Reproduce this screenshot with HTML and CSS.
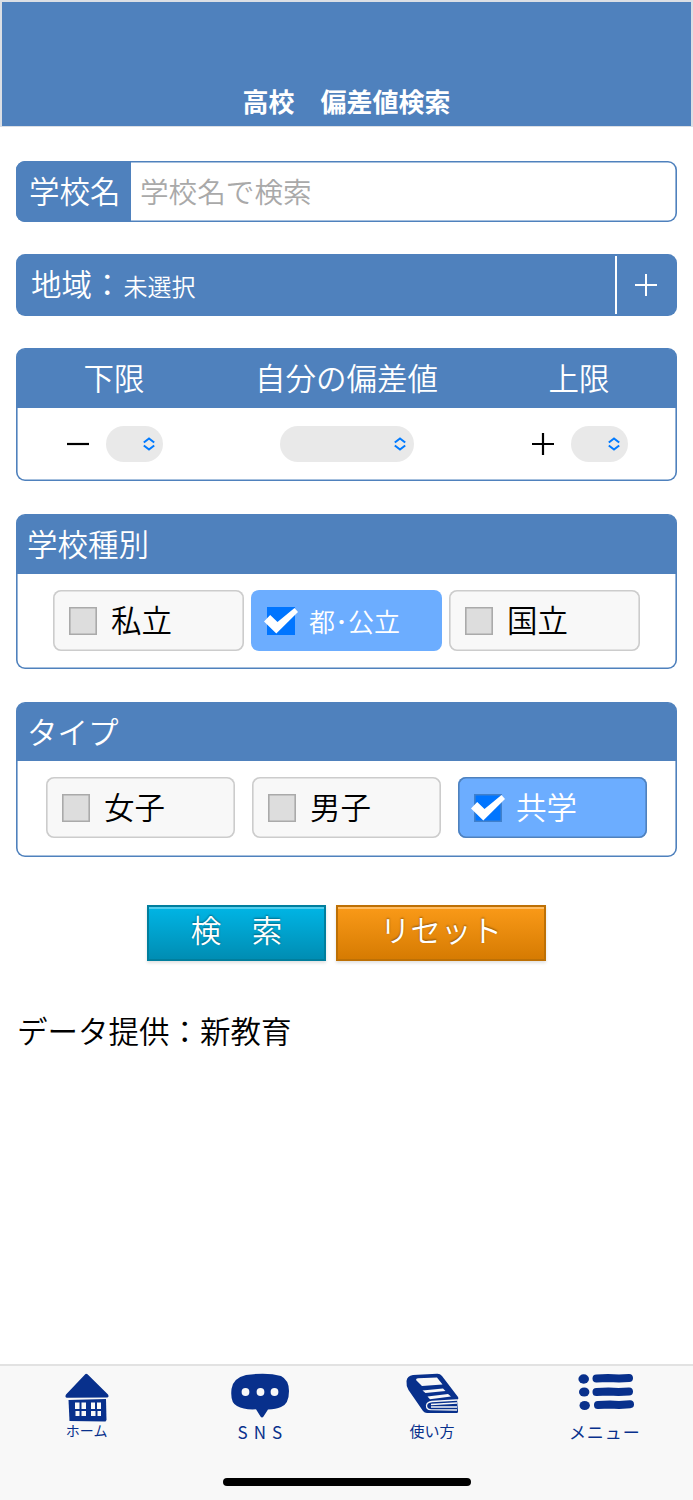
FILE: index.html
```html
<!DOCTYPE html>
<html lang="ja">
<head>
  <meta charset="UTF-8">
  <meta name="viewport" content="width=device-width, initial-scale=1.0">
  <title>高校　偏差値検索</title>
  <link rel="stylesheet" href="styles.css">
</head>
<body>

  <header class="header">
    <h1>高校　偏差値検索</h1>
  </header>

  <main class="main">
    <div class="search">
      <label class="search-label" for="schoolName">学校名</label>
      <input type="text" id="schoolName" placeholder="学校名で検索">
    </div>

    <div class="area">
      <div class="area-name">地域：<small>未選択</small></div>
      <div class="area-open">
        <svg width="24" height="24" viewBox="0 0 24 24"><path d="M1 12h22M12 1v22" stroke="#fff" stroke-width="2"/></svg>
      </div>
    </div>

    <!-- 偏差値 -->
    <section class="card score">
      <div class="card-head score-row">
        <span>下限</span><span>自分の偏差値</span><span>上限</span>
      </div>
      <div class="score-row score-body">
        <div class="cell">
          <svg width="24" height="24" viewBox="0 0 24 24"><path d="M1 12h22" stroke="#000" stroke-width="2.2"/></svg>
          <span class="select">
            <select aria-label="下限"><option></option></select>
            <svg width="12" height="14" viewBox="0 0 12 14"><path d="M.8 5.5 6 1.4l5.2 4.1M.8 8.5 6 12.6l5.2-4.1"/></svg>
          </span>
        </div>
        <div class="cell">
          <span class="select wide">
            <select aria-label="自分の偏差値"><option></option></select>
            <svg width="12" height="14" viewBox="0 0 12 14"><path d="M.8 5.5 6 1.4l5.2 4.1M.8 8.5 6 12.6l5.2-4.1"/></svg>
          </span>
        </div>
        <div class="cell">
          <svg width="24" height="24" viewBox="0 0 24 24"><path d="M1 12h22M12 1v22" stroke="#000" stroke-width="2.2"/></svg>
          <span class="select">
            <select aria-label="上限"><option></option></select>
            <svg width="12" height="14" viewBox="0 0 12 14"><path d="M.8 5.5 6 1.4l5.2 4.1M.8 8.5 6 12.6l5.2-4.1"/></svg>
          </span>
        </div>
      </div>
    </section>

    <!-- 学校種別 -->
    <section class="card kind">
      <div class="card-head">学校種別</div>
      <div class="choices">
        <div class="choice"><span class="box"></span>私立</div>
        <div class="choice on flat">
          <span class="box"><svg width="34" height="26" viewBox="0 0 34 26"><path d="M0 13.500 6.200 7 13.500 14 30.500 0 34 4 12.300 25.500z" fill="#fff"/></svg></span>
          <span class="small">都･公立</span>
        </div>
        <div class="choice"><span class="box"></span>国立</div>
      </div>
    </section>

    <!-- タイプ -->
    <section class="card type">
      <div class="card-head">タイプ</div>
      <div class="choices">
        <div class="choice"><span class="box"></span>女子</div>
        <div class="choice"><span class="box"></span>男子</div>
        <div class="choice on">
          <span class="box"><svg width="34" height="26" viewBox="0 0 34 26"><path d="M0 13.500 6.200 7 13.500 14 30.500 0 34 4 12.300 25.500z" fill="#fff"/></svg></span>共学
        </div>
      </div>
    </section>

    <div class="buttons">
      <button class="btn blue">検　索</button>
      <button class="btn orange">リセット</button>
    </div>

    <p class="credit">データ提供：新教育</p>
  </main>

  <footer class="footer">
    <nav class="tabs">
      <a class="tab">
        <svg width="46" height="50" viewBox="0 0 46 50">
          <path d="M21 1.500q1-1.500 2.500-.2L44 21.500q1.500 2.500-1 3L3 24.800Q.5 24.500 2 21.500z"/>
          <path d="M4.500 27 42 26l.5 21-1 1.500L5.500 48z"/>
          <path class="cut" d="M11 29.500h4.500v6.500H11zM17.500 29.500H22v6.500h-4.500zM11.500 38h4v5h-4zM17.500 38H22v5h-4.500zM27 29.500h4v6.500h-4zM33 29.500h4v6.500h-4zM27 38h4.500v5H27zM33.500 38H37v5h-3.500z"/>
        </svg>
        <span>ホーム</span>
      </a>
      <a class="tab">
        <svg width="60" height="50" viewBox="0 0 60 50">
          <path d="M1.500 16Q3 5 16 2q21-3 35 1 8 4 8 15 0 13-8 16-5 2-13 2.500L33.500 43.500q-1.500 2-3 0l-4.500-7.200Q14 37 7 33 0 30 1.500 16z"/>
          <g class="cut"><circle cx="15.500" cy="19" r="3.900"/><circle cx="30.500" cy="19" r="3.900"/><circle cx="44.500" cy="19" r="3.900"/></g>
        </svg>
        <span class="sns">SNS</span>
      </a>
      <a class="tab">
        <svg class="book" width="54" height="50" viewBox="0 0 54 50">
          <path d="M1.500 8Q2 3 8 2L32 .8q3-.2 5 2.200L53 24q1 2-1 2.500l1 11.500q.5 2-2 2L22 40q-2.500 0-4-2L3.500 17Q1 13 1.500 8z"/>
          <path class="cut" d="M11 7q0-1.500 2-1.800L32 4.500l5.500 7L17 13zM17.500 17.500 38 15.500l2.500 2.500-20 2zM22.500 23.500 43 21l3 2.500-21 2.800z"/>
          <path class="line" d="M52 27 27 28.500q-5 .5-5.500 4 0 4 4 4.200L52 37M26 31.500 52 30M26 34 52 34"/>
        </svg>
        <span class="use">使い方</span>
      </a>
      <a class="tab">
        <svg width="56" height="50" viewBox="0 0 56 50">
          <g class="bars"><path d="M18.500 5.500 30 5l11 .5 10-.5M18.500 19l12-.5 10 .5 10.500-.5M20 32l12-.5 9 .5 11-.8"/></g>
          <ellipse cx="5.700" cy="6" rx="5.300" ry="4.700"/><ellipse cx="6.200" cy="19" rx="5.200" ry="4.600"/><ellipse cx="6.700" cy="32.500" rx="5.200" ry="4.600"/>
        </svg>
        <span class="menu">メニュー</span>
      </a>
    </nav>
    <div class="home-bar"></div>
  </footer>

</body>
</html>
```
FILE: styles.css
```css
* {
  box-sizing: border-box;
}
body {
  margin: 0;
  min-height: 1500px;
  display: flex;
  flex-direction: column;
  background: #fff;
  color: #000;
  font-family: "Noto Sans CJK JP", sans-serif;
  font-size: 30.5px;
  font-weight: 350;
  line-height: 1;
}
.header {
  height: 127px;
  border: 2px solid #dbdfe5;
  border-bottom-width: 1px;
  background: #4f81bd;
  color: #fff;
  display: flex;
  justify-content: center;
  align-items: flex-end;
  padding-bottom: 12px;
}
h1 {
  margin: 0;
  font-size: 26px;
  font-weight: 700;
}
.main {
  flex: 1;
  padding: 34px 16px 0 16px;
}
.search,
.area {
  display: flex;
  height: 61px;
  margin-bottom: 32px;
  border-radius: 9px;
  overflow: hidden;
}
.search {
  padding: 2px;
  box-shadow: inset 0 0 0 1.6px #4f81bd;
}
.search-label {
  width: 115px;
  margin: -2px 0 -2px -2px;
  padding-left: 13px;
  background: #4f81bd;
  color: #fff;
  line-height: 59px;
  white-space: nowrap;
}
.search input {
  flex: 1;
  min-width: 0;
  border: 0;
  padding: 0 0 2px 9px;
  background: none;
  font: inherit;
  font-size: 28.6px;
}
.search input::placeholder {
  color: #a9a9a9;
}
.area {
  height: 62px;
  background: #4f81bd;
  color: #fff;
}
.area-name {
  flex: 1;
  padding-left: 15px;
  line-height: 59px;
}
.area small {
  margin-left: 1px;
  font-size: 24px;
}
.area-open {
  width: 62px;
  margin: 2px 0;
  padding-right: 2px;
  border-left: 2px solid #fff;
  display: flex;
  align-items: center;
  justify-content: center;
}

/* 枠つきカード */
.card {
  margin-bottom: 33px;
  padding: 1px;
  border-radius: 9px;
  box-shadow: inset 0 0 0 1.6px #4f81bd;
}
.card-head {
  height: 59px;
  padding-left: 10px;
  border-radius: 8px 8px 0 0;
  background: #4f81bd;
  color: #fff;
  line-height: 57px;
}
.type .card-head {
  height: 58px;
  line-height: 56px;
}
.score {
  height: 133px;
}
.score-row {
  display: grid;
  grid-template-columns: 194px 271px 1fr;
  text-align: center;
  padding: 0;
}
.score-body {
  height: 71px;
}
.cell {
  display: flex;
  align-items: center;
  justify-content: center;
  gap: 16px;
}
.cell:last-child {
  padding-left: 1px;
}
.select {
  display: flex;
  align-items: center;
  width: 57px;
  height: 36px;
  padding-right: 8px;
  border-radius: 18px;
  background: #e9e9e9;
}
.select.wide {
  width: 134px;
}
.select select {
  flex: 1;
  min-width: 0;
  border: 0;
  background: none;
  appearance: none;
}
.select svg {
  fill: none;
  stroke: #007aff;
  stroke-width: 2;
}

.kind,
.type {
  height: 155px;
}
.choices {
  display: flex;
  justify-content: center;
  gap: 7px;
  padding-top: 16px;
}
.type .choices {
  gap: 17px;
}
.choice {
  display: flex;
  align-items: center;
  width: 191px;
  height: 61px;
  padding: 0 0 3px 16px;
  border-radius: 8px;
  background: #f8f8f8;
  box-shadow: inset 0 0 0 1.6px #ccc;
}
.type .choice {
  width: 189px;
}
.choice.on {
  background: #6cadff;
  box-shadow: inset 0 0 0 1.6px #4f81bd;
  color: #fff;
}
.choice.flat {
  box-shadow: none;
}
.box {
  display: flex;
  width: 28px;
  height: 28px;
  margin: 4px 14px 0 0;
  background: #ddd;
  box-shadow: inset 0 0 0 1.6px #aaa;
}
.on .box {
  background: #0075ff;
  box-shadow: inset 0 0 0 1.6px #4080cc;
}
.flat .box {
  box-shadow: none;
}
.box svg {
  flex: none;
  margin: 1px 0 0 -3px;
}
.small {
  padding-top: 3px;
  font-size: 26px;
}

.buttons {
  display: flex;
  justify-content: center;
  gap: 10px;
  margin-top: 48px;
}
.btn {
  height: 56px;
  padding: 0 0 7px;
  border: 2px solid;
  color: #fff;
  font: inherit;
  text-shadow: 0 -1px 2px rgba(0, 0, 0, 0.4);
}
.blue {
  width: 179px;
  border-color: #007e9d;
  background: linear-gradient(#00b5e5, #008db3);
  box-shadow: inset 0 2px 0 #54cdec, 0 2px 3px rgba(0, 0, 0, 0.12);
}
.orange {
  width: 210px;
  border-color: #bd7005;
  background: linear-gradient(#fa9a18, #d67b02);
  box-shadow: inset 0 2px 0 #ffbd65, 0 2px 3px rgba(0, 0, 0, 0.12);
}
.credit {
  margin: 54px 0 0 1px;
}

.footer {
  height: 136px;
  border-top: 2px solid #e2e2e2;
  background: #f8f8f8;
}
.tabs {
  display: flex;
  padding-top: 7px;
  height: 112px;
}
.tab {
  flex: 1;
  display: flex;
  flex-direction: column;
  align-items: center;
  color: #08308c;
  font-size: 14px;
  font-weight: 400;
}
.tab svg {
  fill: #08308c;
}
.tab .book {
  margin-left: -3px;
}
.tab .cut {
  fill: #f8f8f8;
}
.tab .line {
  fill: none;
  stroke: #f8f8f8;
  stroke-width: 1.3;
}
.tab .bars {
  fill: none;
  stroke: #08308c;
  stroke-width: 8;
  stroke-linecap: round;
  stroke-linejoin: round;
}
.tab .sns {
  font-size: 17px;
  letter-spacing: 6px;
  margin-right: -6px;
}
.tab .use {
  font-size: 15px;
  margin-left: -2px;
}
.tab .menu {
  font-size: 17px;
  letter-spacing: 1px;
  margin-left: -3px;
}
.home-bar {
  width: 248px;
  height: 8px;
  margin: 0 auto;
  border-radius: 4px;
  background: #000;
}
```
